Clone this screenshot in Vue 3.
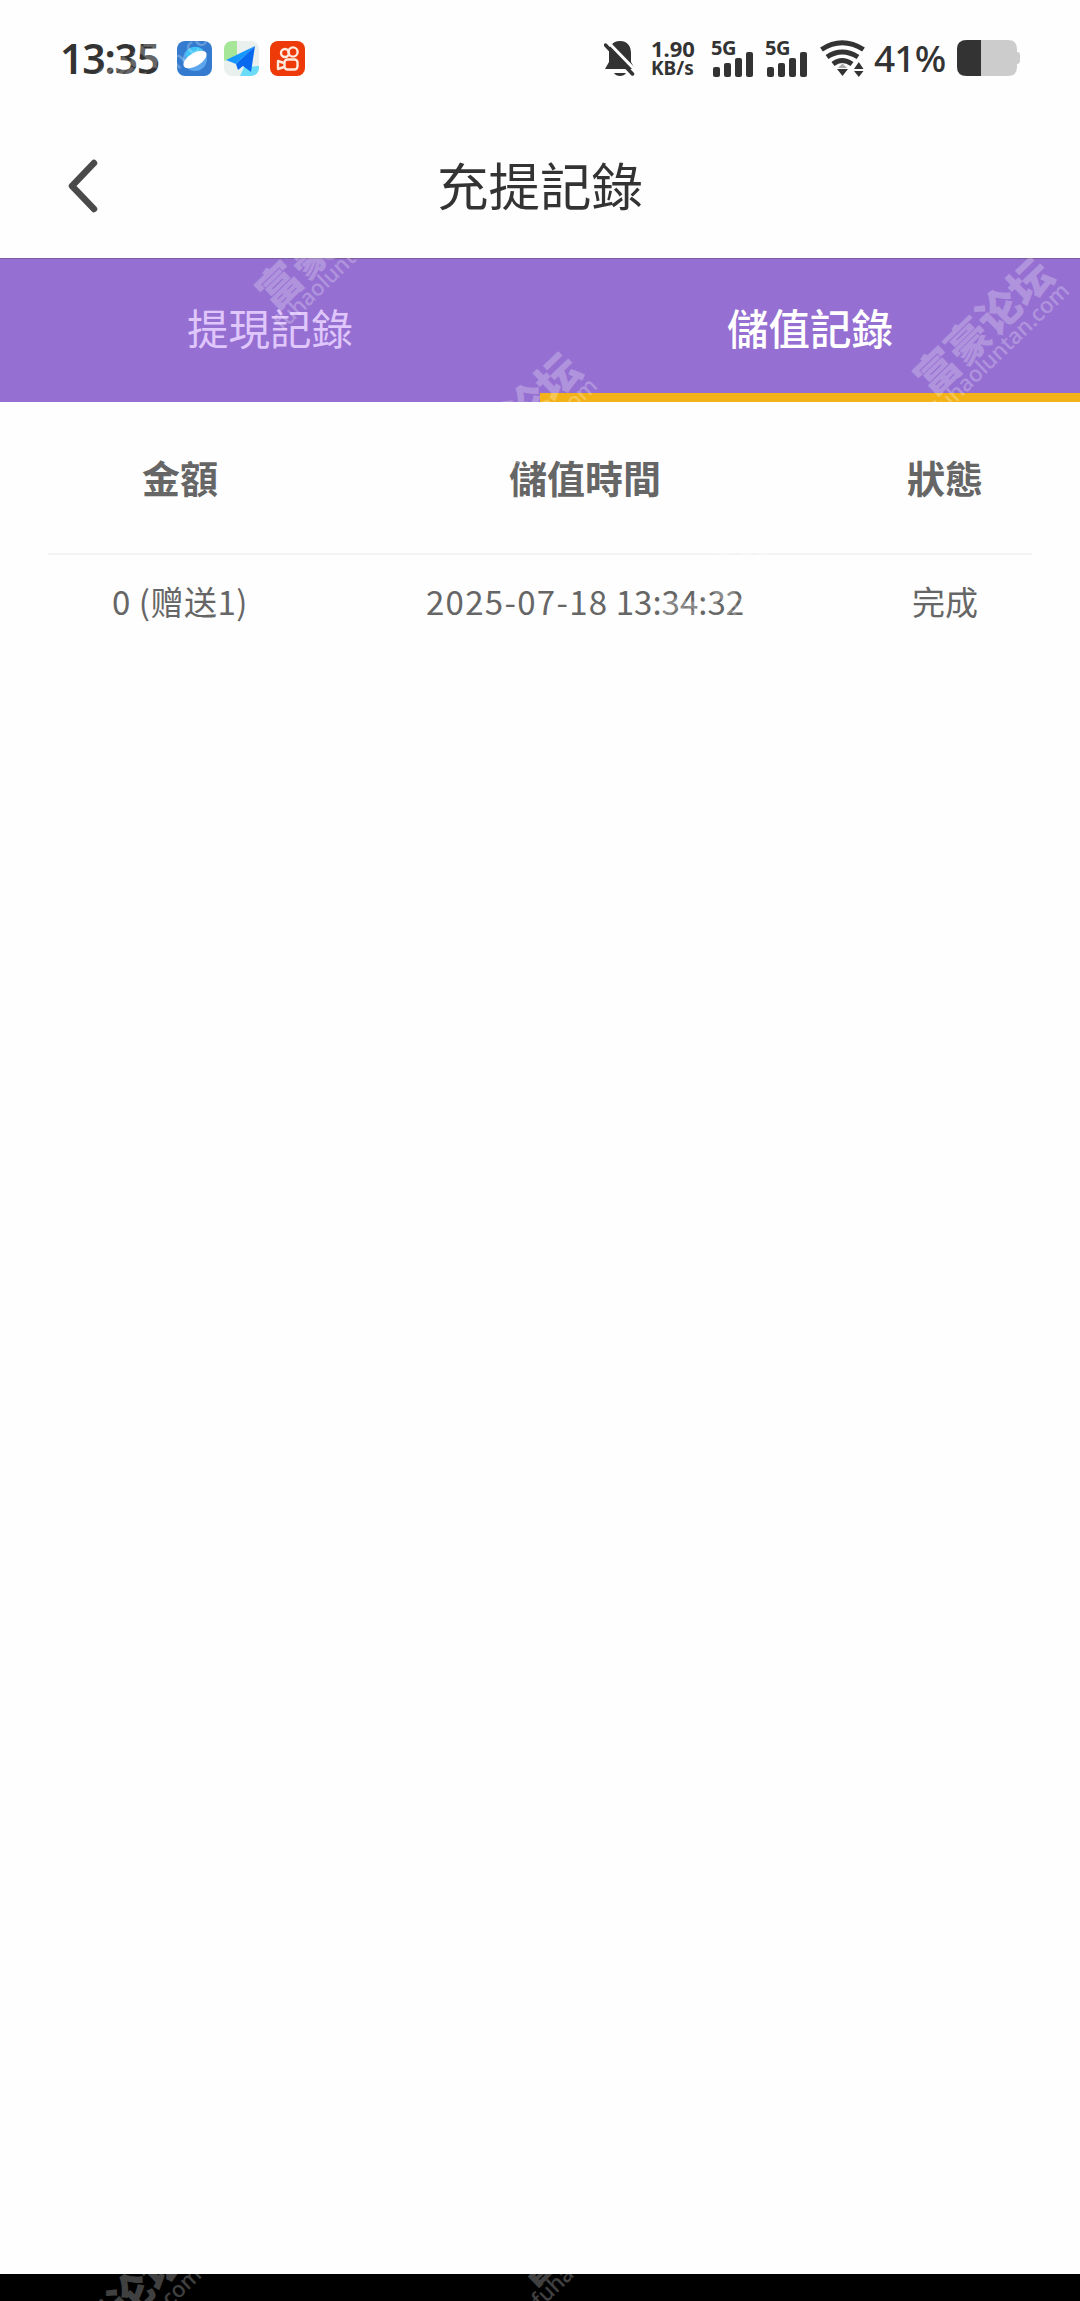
<script setup>
import { ref } from 'vue';

const tabs = ['提現記錄', '儲值記錄'];
const activeTab = ref(1);

const records = [
  { amount: '0 (赠送1)', date: '2025-07-18', time: '13:34:32', status: '完成' }
];

// centre points of the forum stamps
const stamps = [
  { x: 142, y: 64 },
  { x: 801, y: 150 },
  { x: 330, y: 245 },
  { x: 516, y: 426 },
  { x: 988, y: 331 },
  { x: 702, y: 607 },
  { x: 120, y: 2315 },
  { x: 588, y: 2222 }
];
</script>

<template>
  <div class="page">
    <header class="status-bar">
      <span class="clock">13:35</span>
      <div class="apps">
        <svg width="35" height="35" viewBox="0 0 35 35">
          <rect width="35" height="35" rx="8" fill="#347bd0" />
          <circle cx="18" cy="18" r="12" fill="#5ba6ec" />
          <path d="M8 14C10 6 20 3 26 9l-13 9z" fill="#3fc4f5" />
          <ellipse cx="18" cy="18.500" rx="13" ry="6.500" transform="rotate(-32 18 18.500)" fill="#fff" />
        </svg>
        <svg width="35" height="35" viewBox="0 0 35 35">
          <defs>
            <clipPath id="map-clip"><rect width="35" height="35" rx="8" /></clipPath>
          </defs>
          <g clip-path="url(#map-clip)">
            <rect width="35" height="35" fill="#e9f0ee" />
            <path d="M0 0h13v14L0 20z" fill="#a5e698" />
            <path d="M16 35l4-9 15-1v10z" fill="#6bdcf8" />
            <path d="M31 5L2 19l10 4z" fill="#1597ff" />
            <path d="M31 5L12 23l2 6 5-4 8 6z" fill="#0869ef" />
          </g>
        </svg>
        <svg width="35" height="35" viewBox="0 0 35 35" fill="none" stroke="#ffe9dc" stroke-width="2.400">
          <rect width="35" height="35" rx="8" fill="#ee3a08" stroke="none" />
          <circle cx="15" cy="12" r="4" />
          <circle cx="23" cy="11" r="4.600" />
          <rect x="14.500" y="18.500" width="13" height="10" rx="3" />
          <path d="M14 22l-6-2v8l6-2" stroke-linejoin="round" />
        </svg>
      </div>

      <div class="indicators">
        <svg class="bell" width="32" height="37" viewBox="0 0 32 37">
          <path d="M16 1c8 0 11 6 11 12v9l4 7H1l4-7v-9C5 7 8 1 16 1z" fill="#333" />
          <path d="M10 33h12c-2 4-10 4-12 0z" fill="#333" />
          <path d="M4 2l29 30" stroke="#fff" stroke-width="3" />
          <path d="M1.500 5l27 29" stroke="#333" stroke-width="3.500" stroke-linecap="round" />
        </svg>
        <div class="speed">
          <b>1.90</b>
          <b>KB/s</b>
        </div>
        <div v-for="n in 2" :key="n" class="signal">
          <b>5G</b>
          <svg width="42" height="37" viewBox="0 0 42 37" fill="#333">
            <rect x="1" y="27" width="7" height="10" rx="2" />
            <rect x="12" y="23" width="7" height="14" rx="2" />
            <rect x="23" y="18" width="7" height="19" rx="2" />
            <rect x="34" y="12" width="7" height="25" rx="2" />
          </svg>
        </div>
        <svg class="wifi" width="45" height="37" viewBox="0 0 45 37">
          <g fill="none" stroke="#333" stroke-width="5">
            <path d="M1.500 9.500Q22 -4 43.500 9.500" />
            <path d="M7 17Q22 7 38 17" />
            <path d="M13 24Q22 17 32 24" />
          </g>
          <path d="M17 29h11l-5.500 7z" fill="#333" />
          <path d="M18 28l4.500-4.500L27 28z" fill="#aaa" />
          <path d="M34 29l4.800-7 4.700 7zM34 31h9.500l-4.700 6z" fill="#333" />
        </svg>
        <span class="percent">41%</span>
        <svg class="battery" width="63" height="36" viewBox="0 0 63 36">
          <path d="M10 0h41q9 0 9 9v3q3 0 3 3v6q0 3-3 3v3q0 9-9 9H10Q0 36 0 27V9Q0 0 10 0z" fill="#ccc" />
          <path d="M10 0h14v36H10Q0 36 0 27V9Q0 0 10 0z" fill="#333" />
        </svg>
      </div>
    </header>

    <nav class="nav-bar">
      <svg class="back" width="34" height="56" viewBox="0 0 34 56">
        <path d="M29 5L7 28l22 23" fill="none" stroke="#4a4a4a" stroke-width="6.500" stroke-linecap="round" stroke-linejoin="round" />
      </svg>
      <h1>充提記錄</h1>
    </nav>

    <div class="tabs">
      <button
          v-for="(tab, i) in tabs"
          :key="tab"
          class="tab"
          :class="{ active: i === activeTab }"
          @click="activeTab = i"
      >
        {{ tab }}
      </button>
    </div>

    <main class="records">
      <div class="row head">
        <span>金額</span>
        <span>儲值時間</span>
        <span>狀態</span>
      </div>
      <div v-for="item in records" :key="item.date + item.time" class="row">
        <span class="amount">{{ item.amount }}</span>
        <span><span class="date">{{ item.date }}</span> {{ item.time }}</span>
        <span>{{ item.status }}</span>
      </div>
    </main>

    <footer class="bottom-bar"></footer>

    <div class="stamps">
      <div v-for="(s, i) in stamps" :key="i" class="stamp" :style="{ left: s.x + 'px', top: s.y + 'px' }">
        <strong>富豪论坛</strong>
        <span>fuhaoluntan.com</span>
      </div>
    </div>
  </div>
</template>

<style>
body {
  margin: 0;
}
</style>

<style scoped>
.page {
  position: relative;
  width: 1080px;
  height: 2301px;
  display: flex;
  flex-direction: column;
  overflow: hidden;
  background: #fefefe;
  color: #333;
  font-family: "Noto Sans CJK TC", "Noto Sans", sans-serif;
}

.status-bar {
  height: 116px;
  padding: 0 60px;
  box-sizing: border-box;
  display: flex;
  align-items: center;
  font-family: "Noto Sans", sans-serif;
}

.clock {
  width: 117px;
  font-size: 41px;
  font-weight: 600;
  letter-spacing: -1.200px;
}

.apps {
  display: flex;
  gap: 11.500px;
}

.indicators {
  margin-left: auto;
  display: flex;
  align-items: center;
}

.speed {
  width: 43px;
  margin: 0 18px 0 15px;
  display: flex;
  flex-direction: column;
  font-size: 19px;
  line-height: 20px;
}

.speed b:first-child {
  font-size: 22px;
}

.signal {
  position: relative;
  height: 37px;
  margin-right: 12px;
}

.signal b {
  position: absolute;
  left: -1px;
  top: -2px;
  font-size: 20px;
  line-height: 20px;
  letter-spacing: -0.500px;
}

.wifi {
  margin-right: 9px;
}

.percent {
  width: 83px;
  padding-bottom: 2px;
  font-size: 37px;
  font-weight: 500;
  letter-spacing: -0.800px;
}

.nav-bar {
  position: relative;
  height: 134px;
  padding-bottom: 8px;
  display: flex;
  justify-content: center;
  align-items: center;
}

.back {
  position: absolute;
  left: 65px;
  top: 42px;
}

h1 {
  margin: 0;
  font-size: 51.500px;
  font-weight: 400;
}

.tabs {
  height: 144px;
  box-sizing: border-box;
  display: flex;
  background: #966fd2;
  border-top: 1px solid #7d5c9e;
}

.tab {
  flex: 1;
  padding: 1px 0 0;
  border: 0;
  border-bottom: 9px solid transparent;
  background: none;
  color: #dfc6fb;
  font-family: inherit;
  font-size: 41.500px;
}

.tab.active {
  border-bottom-color: #f3b318;
  color: #fff;
  font-weight: 500;
}

.records {
  flex: 1;
  padding: 0 48px;
}

.row {
  height: 92px;
  display: grid;
  grid-template-columns: 264px 546px 174px;
  align-items: center;
  text-align: center;
  color: #666;
  font-size: 33px;
}

.row.head {
  height: 148px;
  padding-bottom: 3px;
  border-bottom: 2px solid #f3f3f3;
  font-size: 38px;
  font-weight: 700;
}

.amount {
  font-family: "Noto Sans CJK SC", sans-serif;
  letter-spacing: 0.500px;
}

.date {
  letter-spacing: 1.300px;
}

.bottom-bar {
  height: 27px;
  background: #000;
}

.stamps {
  position: absolute;
  inset: 0;
  pointer-events: none;
}

.stamp {
  position: absolute;
  display: flex;
  flex-direction: column;
  align-items: center;
  color: #fff;
  opacity: 0.25;
  white-space: nowrap;
  transform: translate(-50%, -50%) rotate(-44deg);
}

.stamp strong {
  font-family: "Noto Sans CJK SC", sans-serif;
  font-size: 43px;
  font-weight: 900;
  line-height: 44px;
}

.stamp span {
  margin: -3px 8px 0 0;
  font-family: "Noto Sans", sans-serif;
  font-size: 22px;
  font-weight: 500;
  line-height: 22px;
}
</style>
